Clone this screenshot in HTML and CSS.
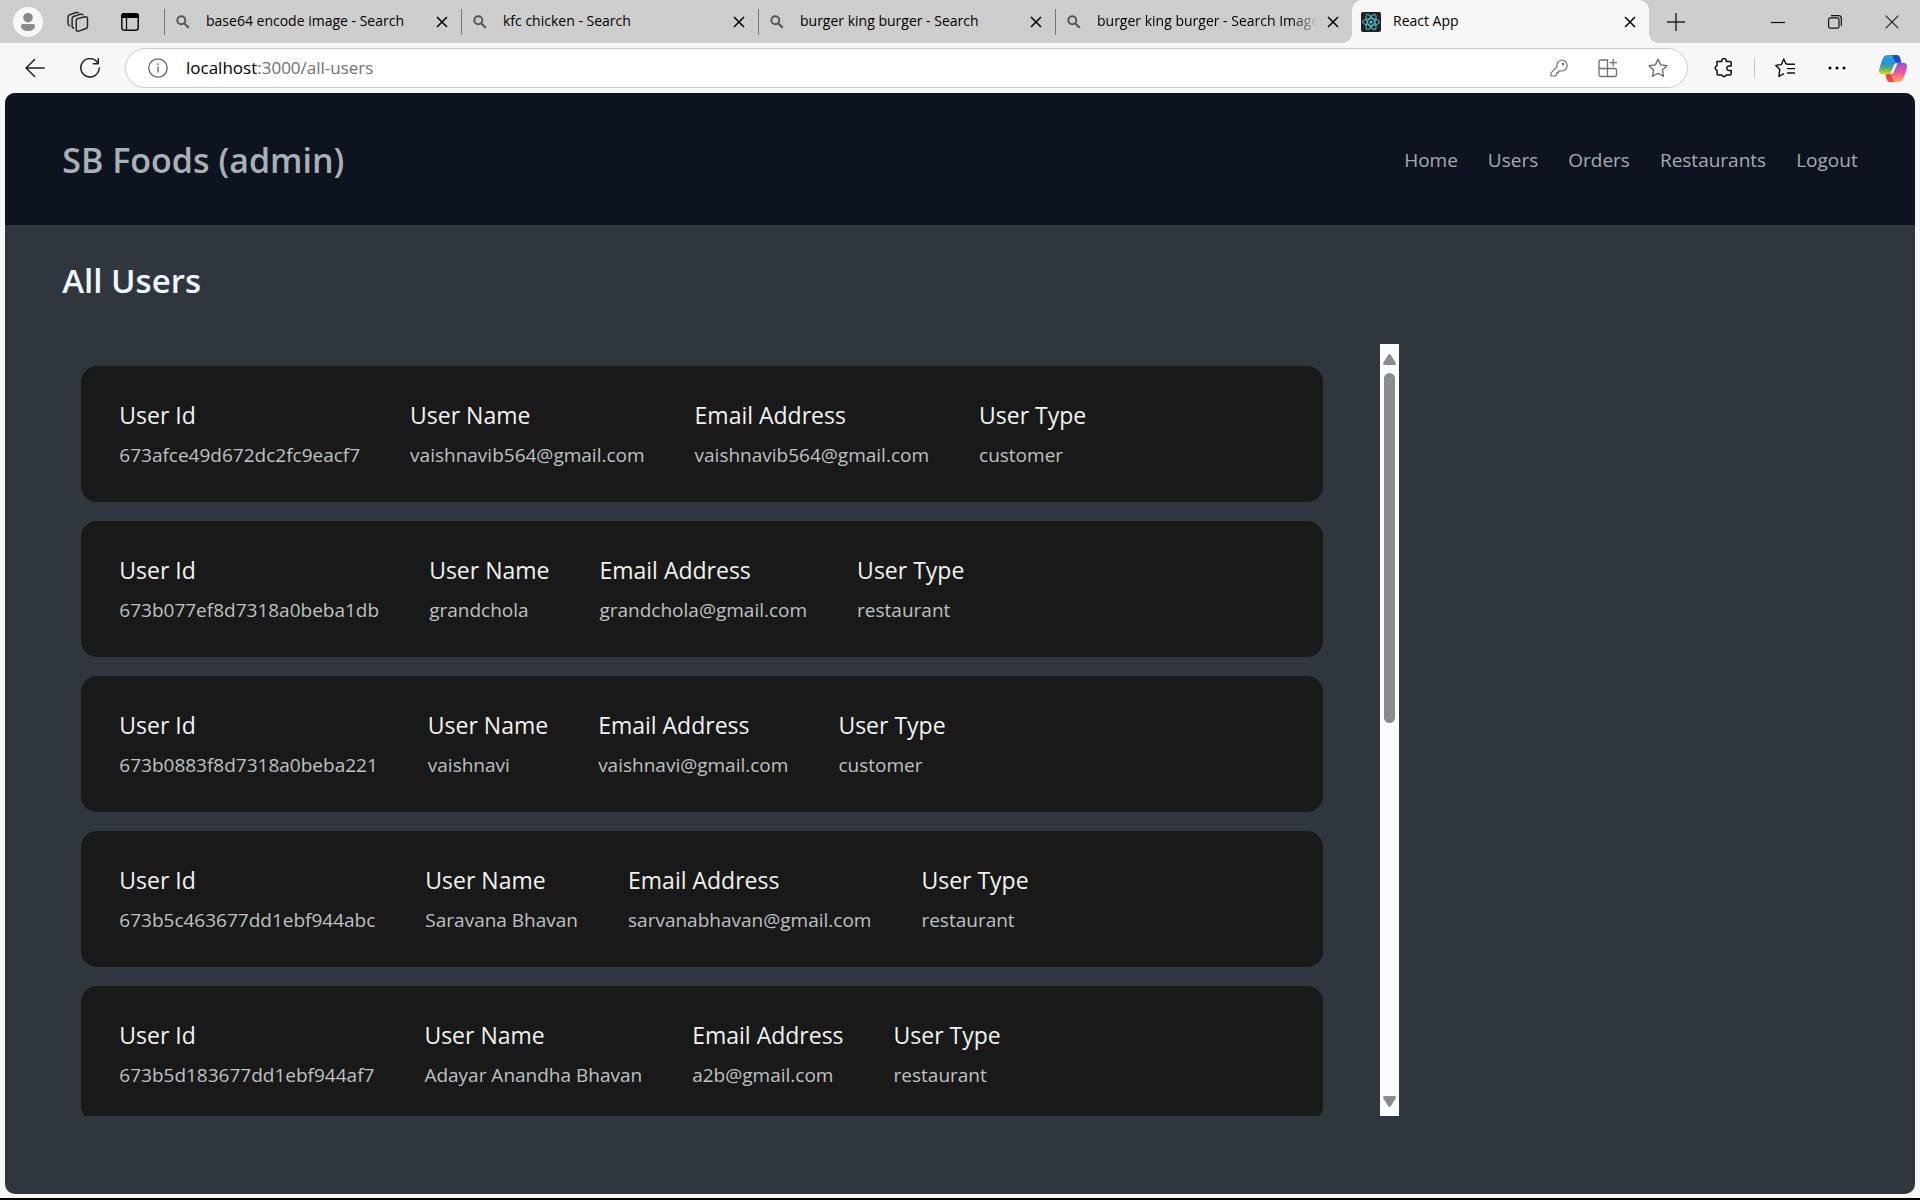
FILE: index.html
```html
<!DOCTYPE html>
<html lang="en">
<head>
<meta charset="utf-8">
<title>React App</title>
<link rel="stylesheet" href="styles.css">
</head>
<body>
<svg class="defs" aria-hidden="true">
  <symbol id="i-search" viewBox="0 0 14 14"><circle cx="5.3" cy="5.3" r="4" fill="none" stroke="currentColor" stroke-width="1.9"/><path d="M8.4 8.4 12.8 12.8" stroke="currentColor" stroke-width="2.1"/></symbol>
  <symbol id="i-close" viewBox="0 0 14 14"><path d="M2 2 12 12M12 2 2 12" fill="none" stroke="currentColor" stroke-width="1.5"/></symbol>
</svg>
<div class="tabstrip">
  <div class="tools">
    <button class="ico" aria-label="Profile"><svg width="30" height="30" viewBox="0 0 30 30"><circle cx="15" cy="15" r="15" fill="#f7f7f7"/><circle cx="15" cy="10.7" r="4.8" fill="#8a8a8a"/><path d="M8 18.7a1.6 1.6 0 0 1 1.6-1.6h10.8a1.6 1.6 0 0 1 1.6 1.6c0 3.2-3 5.3-7 5.3s-7-2.100-7-5.300z" fill="#8a8a8a"/></svg></button>
    <button class="ico" aria-label="Workspaces"><svg width="22" height="22" viewBox="0 0 22 22" fill="none" stroke="#222" stroke-width="1.4" stroke-linejoin="round" stroke-linecap="round"><path d="M9.200 9.500q0-1.400 1.300-1.900L18 5.800q2.500-.3 2.500 1.700v8q0 1.500-1.400 2l-7.400 2.600q-2.500.5-2.500-1.700z"/><path d="M6.600 17.200q-1.500-.4-1.500-2V7.500q0-1.500 1.400-2l7.200-2.300q1.600-.3 2.300.6"/><path d="M2.700 14.700Q1 14.200 1 12.600V5.800q0-1.500 1.400-2L9.200 1.500q1.600-.4 2.300.4"/></svg></button>
    <button class="ico" aria-label="Tab actions"><svg width="20" height="20" viewBox="0 0 20 20"><rect x="1.800" y="1.800" width="16.400" height="16.400" rx="2.500" fill="none" stroke="#111" stroke-width="1.500"/><path d="M1 6V4q0-3 3-3h12q3 0 3 3v2z" fill="#000"/><path d="M6.500 6v12" stroke="#111" stroke-width="1.300"/></svg></button>
  </div>
  <div class="tab"><svg class="fav"><use href="#i-search"/></svg><span class="label">base64 encode image - Search</span><button class="x" aria-label="Close tab"><svg><use href="#i-close"/></svg></button></div>
  <div class="tab"><svg class="fav"><use href="#i-search"/></svg><span class="label">kfc chicken - Search</span><button class="x" aria-label="Close tab"><svg><use href="#i-close"/></svg></button></div>
  <div class="tab"><svg class="fav"><use href="#i-search"/></svg><span class="label">burger king burger - Search</span><button class="x" aria-label="Close tab"><svg><use href="#i-close"/></svg></button></div>
  <div class="tab"><svg class="fav"><use href="#i-search"/></svg><span class="label fade">burger king burger - Search Images</span><button class="x" aria-label="Close tab"><svg><use href="#i-close"/></svg></button></div>
  <div class="tab active"><svg class="react" viewBox="0 0 20 20"><rect width="20" height="20" rx="2" fill="#222"/><g fill="none" stroke="#58c4dc" stroke-width="1"><ellipse cx="10" cy="10" rx="8.500" ry="3.300"/><ellipse cx="10" cy="10" rx="8.500" ry="3.300" transform="rotate(60 10 10)"/><ellipse cx="10" cy="10" rx="8.500" ry="3.300" transform="rotate(120 10 10)"/></g><circle cx="10" cy="10" r="1.600" fill="#58c4dc"/></svg><span class="label">React App</span><button class="x" aria-label="Close tab"><svg><use href="#i-close"/></svg></button></div>
  <button class="ico newtab" aria-label="New tab"><svg width="18" height="18" viewBox="0 0 18 18" stroke="#222" stroke-width="1.400"><path d="M9 0v18M0 9h18"/></svg></button>
  <div class="window">
    <button class="ico" aria-label="Minimize"><svg width="14" height="14" viewBox="0 0 14 14"><path d="M0 7.500h14" stroke="#111" stroke-width="1.200"/></svg></button>
    <button class="ico" aria-label="Restore"><svg width="14" height="14" viewBox="0 0 14 14" fill="none" stroke="#111" stroke-width="1.200"><rect x=".6" y="2.800" width="10.400" height="10.400" rx="1.800"/><path d="M3 .7h7.500q2.800 0 2.800 2.800V11"/></svg></button>
    <button class="ico" aria-label="Close window"><svg width="14" height="14" viewBox="0 0 14 14"><path d="M.6.6l12.800 12.800M13.400.6.6 13.400" stroke="#222" stroke-width="1.200"/></svg></button>
  </div>
</div>
<div class="toolbar">
  <div class="history">
    <button class="ico" aria-label="Back"><svg width="20" height="20" viewBox="0 0 20 20" fill="none" stroke="#222" stroke-width="1.500" stroke-linecap="round" stroke-linejoin="round"><path d="M19.200 10H1M9.600 1.500 1 10l8.600 8.500"/></svg></button>
    <button class="ico" aria-label="Refresh"><svg width="20" height="20" viewBox="0 0 20 20" fill="none" stroke="#222" stroke-width="1.500" stroke-linecap="round" stroke-linejoin="round"><path d="M17.400 4.300A9.200 9.200 0 1 0 19.200 10"/><path d="M18.300.8v5h-5"/></svg></button>
  </div>
  <div class="address">
    <svg width="20" height="20" viewBox="0 0 20 20" fill="none" stroke="#666" stroke-width="1.300"><circle cx="10" cy="10" r="9.200"/><path d="M10 8.500v6M10 5.200v1.700"/></svg>
    <div class="url">localhost<span>:3000/all-users</span></div>
    <button class="ico" aria-label="Passwords"><svg width="18" height="18" viewBox="0 0 18 18" fill="none" stroke="#707070" stroke-width="1.200" stroke-linejoin="round"><path d="M11.500 1a5.500 5.500 0 1 1-1.300 10.800L8.500 12v1.800H6.600v1.700L5 17H1v-3.200l6-6.200A5.600 5.600 0 0 1 11.500 1z"/><circle cx="13" cy="5" r=".7"/></svg></button>
    <button class="ico" aria-label="Install app"><svg width="20" height="20" viewBox="0 0 20 20" fill="none" stroke="#707070" stroke-width="1.300"><path d="M9.500 18.500H3q-2 0-2-2V4q0-2 2-2h6.500zM1 10.500h15.500q2 0 2 2v4q0 2-2 2h-7M15.200 1v7.400M11.500 4.700h7.400"/></svg></button>
    <button class="ico" aria-label="Add to favorites"><svg width="20" height="20" viewBox="0 0 20 20" fill="none" stroke="#666" stroke-width="1.300" stroke-linejoin="round"><path d="M10 1.200l2.700 5.700 6.200.8-4.500 4.300 1.100 6.300L10 15.300l-5.500 3 1.100-6.300L1.100 7.700l6.200-.8z"/></svg></button>
  </div>
  <div class="actions">
    <div class="group">
      <button class="ico" aria-label="Extensions"><svg width="20" height="20" viewBox="0 0 20 20" fill="none" stroke="#111" stroke-width="1.500" stroke-linejoin="round"><path d="M3 3.500h4.800a2.300 2.300 0 1 1 4.400 0H16q1.200 0 1.200 1.200V8h-1.700a2.300 2.300 0 1 0 0 4.500h1.700v3.300q0 1.200-1.200 1.200h-3.800a2.300 2.300 0 0 1-4.400 0H4.200Q3 17 3 15.800v-3.500a2.300 2.300 0 0 1 0-4.500z"/></svg></button>
      <span class="rule"></span>
      <button class="ico" aria-label="Favorites"><svg width="20" height="20" viewBox="0 0 20 20" fill="none" stroke="#111" stroke-width="1.400" stroke-linejoin="round" stroke-linecap="round"><path d="M13 6.200 10.800 5.800 8.800 1 6.300 6.600.8 7.400l4 4-.9 7 4.600-2.500M13 6.200h6.500M12.500 10.600h7M12.500 15h7"/></svg></button>
    </div>
    <button class="ico" aria-label="Settings and more"><svg width="18" height="4" viewBox="0 0 18 4"><circle cx="2" cy="2" r="1.500"/><circle cx="9" cy="2" r="1.500"/><circle cx="16" cy="2" r="1.500"/></svg></button>
    <button class="ico" aria-label="Copilot"><svg width="28" height="27" viewBox="0 0 28 27"><defs><linearGradient id="ca" x1="0" y1="0" x2="0" y2="1"><stop offset="0" stop-color="#1aa7ee"/><stop offset=".45" stop-color="#2b8fd0"/><stop offset=".7" stop-color="#56b566"/><stop offset="1" stop-color="#f4cf1b"/></linearGradient><linearGradient id="cb" x1="0" y1="0" x2="0" y2="1"><stop offset="0" stop-color="#9a50e6"/><stop offset=".5" stop-color="#ee5590"/><stop offset="1" stop-color="#ffad62"/></linearGradient></defs><path d="M12 0h6q2.200 0 3 2.500l1.300 5.200H19q-3 0-4 3L12.500 17q-.8 2.200-3 2.200H4Q-1.300 19 .5 13L3.500 4Q5 0 9 0z" fill="url(#ca)"/><path d="M13 0h5q2.200 0 3 2.500l1.300 5.200H18Q15.500 7 14.800 4z" fill="#1b48cf"/><path d="M16 27h-5q-2.500 0-3.200-2.600L6.500 19.200H10q2.500 0 3.400-3L16 10q.8-2.300 3-2.300h5q5.300 0 3.600 6l-3 9.300Q23 27 19 27z" fill="url(#cb)"/><path d="M15 27h-4q-2.500 0-3.200-2.600L6.500 19.200H10q3 0 3.300 3.800z" fill="#e8453c"/><path d="M15.500 9 18.500 8 14 18.500 11.500 19z" fill="#fff"/></svg></button>
  </div>
</div>
<div class="page">
  <header class="navbar">
    <h1>SB Foods (admin)</h1>
    <nav><a href="#">Home</a><a href="#">Users</a><a href="#">Orders</a><a href="#">Restaurants</a><a href="#">Logout</a></nav>
  </header>
  <main>
    <h2>All Users</h2>
    <section class="users">
      <div class="list">
        <article class="card"><dl><dt>User Id</dt><dd>673afce49d672dc2fc9eacf7</dd></dl><dl><dt>User Name</dt><dd>vaishnavib564@gmail.com</dd></dl><dl><dt>Email Address</dt><dd>vaishnavib564@gmail.com</dd></dl><dl><dt>User Type</dt><dd>customer</dd></dl></article>
        <article class="card"><dl><dt>User Id</dt><dd>673b077ef8d7318a0beba1db</dd></dl><dl><dt>User Name</dt><dd>grandchola</dd></dl><dl><dt>Email Address</dt><dd>grandchola@gmail.com</dd></dl><dl><dt>User Type</dt><dd>restaurant</dd></dl></article>
        <article class="card"><dl><dt>User Id</dt><dd>673b0883f8d7318a0beba221</dd></dl><dl><dt>User Name</dt><dd>vaishnavi</dd></dl><dl><dt>Email Address</dt><dd>vaishnavi@gmail.com</dd></dl><dl><dt>User Type</dt><dd>customer</dd></dl></article>
        <article class="card"><dl><dt>User Id</dt><dd>673b5c463677dd1ebf944abc</dd></dl><dl><dt>User Name</dt><dd>Saravana Bhavan</dd></dl><dl><dt>Email Address</dt><dd>sarvanabhavan@gmail.com</dd></dl><dl><dt>User Type</dt><dd>restaurant</dd></dl></article>
        <article class="card"><dl><dt>User Id</dt><dd>673b5d183677dd1ebf944af7</dd></dl><dl><dt>User Name</dt><dd>Adayar Anandha Bhavan</dd></dl><dl><dt>Email Address</dt><dd>a2b@gmail.com</dd></dl><dl><dt>User Type</dt><dd>restaurant</dd></dl></article>
      </div>
      <div class="scrollbar" aria-hidden="true">
        <svg width="13" height="11" viewBox="0 0 13 11"><path d="M5.300.8q1.200-1.500 2.400 0l5 8q.7 2.200-1.200 2.200h-10Q-.4 11 .3 8.800z" fill="#8b8b8b"/></svg>
        <div class="track"><div class="thumb"></div></div>
        <svg width="13" height="11" viewBox="0 0 13 11"><path d="M5.300 10.200q1.200 1.500 2.400 0l5-8Q13.400 0 11.500 0h-10Q-.4 0 .3 2.200z" fill="#8b8b8b"/></svg>
      </div>
    </section>
  </main>
</div>
</body>
</html>
```
FILE: styles.css
```css
* { box-sizing: border-box; }

body {
  margin: 0;
  height: 100vh;
  display: flex;
  flex-direction: column;
  background: #f7f7f7;
  border-bottom: 2px solid #000;
  font-family: "Open Sans", "Noto Sans", sans-serif;
  color: #000;
  overflow: hidden;
}

h1, h2, dl, dd { margin: 0; }
button { border: 0; padding: 0; background: none; color: inherit; font: inherit; }
svg { display: block; flex: none; }
.defs { position: absolute; width: 0; height: 0; }
.ico { display: flex; align-items: center; justify-content: center; flex: none; }

/* tab strip */
.tabstrip { display: flex; flex: none; height: 43px; background: #cdcdcd; }
.tools { display: flex; align-items: center; gap: 31px; width: 164px; flex: none; padding-left: 13px; }
.tools .ico:first-child { margin-right: -7px; }
.tab {
  position: relative;
  display: flex;
  align-items: center;
  flex: 0 1 297px;
  min-width: 0;
  padding-left: 12px;
  padding-right: 12px;
}
.tab:not(.active)::before { content: ""; position: absolute; left: 0; top: 9px; width: 1px; height: 26px; background: #777; }
.fav { width: 14px; height: 14px; margin-right: 16px; color: #555; }
.label { flex: 1; min-width: 0; overflow: hidden; white-space: nowrap; font-size: 14px; line-height: 20px; padding-bottom: 1px; }
.fade { mask-image: linear-gradient(to right, #000 88%, transparent); }
.x { flex: none; margin-left: 8px; }
.x svg { width: 14px; height: 14px; }
.active { background: #f7f7f7; border-radius: 10px 10px 0 0; padding-left: 9px; }
.active::before, .active::after { content: ""; position: absolute; bottom: 0; width: 10px; height: 10px; }
.active::before { left: -10px; background: radial-gradient(circle at 0 0, transparent 10px, #f7f7f7 10px); }
.active::after { right: -10px; background: radial-gradient(circle at 100% 0, transparent 10px, #f7f7f7 10px); }
.react { width: 20px; height: 20px; margin-right: 12px; }
.newtab { margin-left: 18px; }
.window { display: flex; margin-left: auto; }
.window .ico { width: 57px; }

/* toolbar */
.toolbar { display: flex; align-items: center; flex: none; height: 50px; }
.history { display: flex; gap: 35px; width: 125px; padding-left: 25px; flex: none; }
.address {
  flex: 1;
  display: flex;
  align-items: center;
  height: 40px;
  padding: 0 19px 0 22px;
  border: 1px solid #ccc;
  border-radius: 20px;
  background: #fff;
}
.address .ico { margin-left: 30px; }
.url { flex: 1; margin-left: 18px; font-size: 17px; line-height: 24px; }
.url span { color: #707070; }
.actions { display: flex; align-items: center; width: 232px; flex: none; padding: 0 13px 0 26px; justify-content: space-between; }
.group { display: flex; align-items: center; gap: 20px; }
.rule { width: 1px; height: 20px; background: #c4c4c4; }

/* application */
.page {
  flex: 1;
  min-height: 0;
  display: flex;
  flex-direction: column;
  margin: 0 5px 4px;
  border-radius: 10px;
  background: #30363e;
  overflow: hidden;
}
.navbar {
  display: flex;
  align-items: center;
  justify-content: space-between;
  flex: none;
  height: 132px;
  padding: 2px 3% 0;
  background: #0e141f;
  color: #a9b1b6;
}
h1, h2 { font-weight: 600; line-height: 42px; }
h1 { font-size: 34px; }
h2 { flex: none; font-size: 33px; color: #f0f8ff; }
nav { display: flex; gap: 30px; }
nav a { color: #a4abb3; font-size: 19px; line-height: 30px; text-decoration: none; }
main { flex: 1; min-height: 0; display: flex; flex-direction: column; padding: 35px 3% 78px; }
.users { display: flex; flex: 1; min-height: 0; width: 1337px; max-width: 100%; margin-top: 42px; }
.list { flex: 1; min-width: 0; overflow: hidden; padding: 22px 57px 0 19px; }
.card {
  display: flex;
  gap: 50px;
  margin-bottom: 19px;
  padding: 34px 38px 32px;
  border-radius: 16px;
  background: #191919;
}
dt { color: #f2f2f2; font-size: 23px; line-height: 30px; margin-bottom: 10px; }
dd { color: #bfc1c3; font-size: 19px; line-height: 30px; }
.scrollbar {
  display: flex;
  flex-direction: column;
  align-items: center;
  width: 19px;
  flex: none;
  padding: 10px 0 9px;
  background: #fcfcfc;
}
.track { flex: 1; width: 11px; padding: 8px 0; }
.thumb { height: 49%; border-radius: 6px; background: #8b8b8b; }
```
